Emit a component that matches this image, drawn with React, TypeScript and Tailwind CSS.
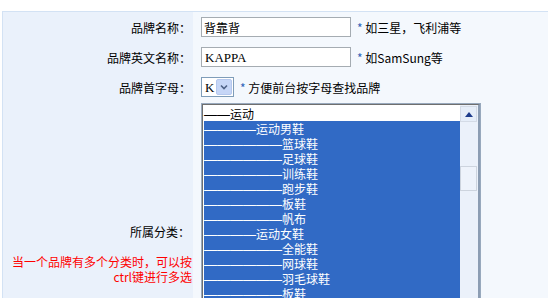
import React from 'react';

const CATEGORIES = [
  { depth: 1, name: '运动', selected: false },
  { depth: 2, name: '运动男鞋', selected: true },
  { depth: 3, name: '篮球鞋', selected: true },
  { depth: 3, name: '足球鞋', selected: true },
  { depth: 3, name: '训练鞋', selected: true },
  { depth: 3, name: '跑步鞋', selected: true },
  { depth: 3, name: '板鞋', selected: true },
  { depth: 3, name: '帆布', selected: true },
  { depth: 2, name: '运动女鞋', selected: true },
  { depth: 3, name: '全能鞋', selected: true },
  { depth: 3, name: '网球鞋', selected: true },
  { depth: 3, name: '羽毛球鞋', selected: true },
  { depth: 3, name: '板鞋', selected: true },
  { depth: 3, name: '帆布', selected: true },
];

function Hint({ children }: { children: React.ReactNode }) {
  return (
    <span className="ml-[6px] whitespace-nowrap">
      <span className="text-[#2F62B8]">*</span> {children}
    </span>
  );
}

function Row({ label, children }: { label: React.ReactNode; children: React.ReactNode }) {
  return (
    <div className="flex h-[30px]">
      <div className="w-[190px] shrink-0 bg-[#EAF1FB] flex items-center justify-end pr-[2px]">{label}</div>
      <div className="flex-1 flex items-center pl-[8px]">{children}</div>
    </div>
  );
}

export default function App() {
  return (
    <div className="w-[548px] h-[298px] overflow-hidden bg-white pt-[11px] text-[12px] leading-[15px] text-black font-['Noto_Sans_CJK_SC',sans-serif]">
      <div className="ml-[2px] border-l border-t border-[#D3E2F4] bg-[#F4F8FD]">

        <Row label="品牌名称：">
          <div className="w-[150px] h-[20px] border border-[#A5ACB2] bg-white px-[2px] flex items-center">背靠背</div>
          <Hint>如三星，飞利浦等</Hint>
        </Row>

        <Row label="品牌英文名称：">
          <div className="w-[150px] h-[20px] border border-[#A5ACB2] bg-white px-[3px] flex items-center font-['Liberation_Serif','Noto_Sans_CJK_SC',serif] text-[13px]">KAPPA</div>
          <Hint>如SamSung等</Hint>
        </Row>

        <Row label="品牌首字母：">
          <div className="w-[33px] h-[20px] border border-[#7F9DB9] bg-white flex items-center">
            <span className="flex-1 pl-[3px] font-['Liberation_Serif',serif] text-[13px]">K</span>
            <span className="w-[16px] h-[16px] mr-[1px] rounded-[2px] bg-[#C6D6F7] border border-[#B5C8EE] flex items-center justify-center">
              <svg width="8" height="6" viewBox="0 0 8 6">
                <path d="M1 1.5 L4 4.5 L7 1.5" fill="none" stroke="#4D6185" strokeWidth="1.6" />
              </svg>
            </span>
          </div>
          <Hint>方便前台按字母查找品牌</Hint>
        </Row>

        <div className="flex">
          <div className="w-[190px] shrink-0 bg-[#EAF1FB] flex flex-col justify-center items-end pr-[1px]">
            <div className="pr-[2px]">所属分类：</div>
            <div className="h-[15px]" />
            <div className="text-[#FF0000] text-right">当一个品牌有多个分类时，可以按<br />ctrl键进行多选</div>
          </div>
          <div className="flex-1 pl-[8px] py-[1px]">
            <div className="w-[280px] h-[301px] border border-[#98A9BD] overflow-hidden">
              <div className="h-full flex border-t border-l border-[#6F6F6F] border-r-2 border-r-[#8C9DB3] bg-white">
                <div className="flex-1 pl-[1px] pt-[1px] overflow-hidden">
                  {CATEGORIES.map((c, i) => (
                    <div
                      key={i}
                      className={
                        c.selected
                          ? 'h-[15px] bg-[#316AC5] text-white whitespace-nowrap'
                          : 'h-[15px] bg-white text-black whitespace-nowrap'
                      }
                    >
                      <span className="font-['Liberation_Sans',sans-serif] text-[13px]">{'——'.repeat(c.depth)}</span>
                      {c.name}
                    </div>
                  ))}
                </div>
                <div className="w-[18px] shrink-0 bg-[#EBF1FA] pt-[1px] flex flex-col">
                  <div className="h-[16px] w-[17px] border border-[#D4DBE6] bg-[#E6EEF9] flex items-center justify-center">
                    <svg width="8" height="5" viewBox="0 0 8 5">
                      <path d="M4 0 L8 5 L0 5 Z" fill="#1E3C8C" />
                    </svg>
                  </div>
                  <div className="h-[44px]" />
                  <div className="h-[25px] w-[17px] border border-[#CDD4DE] bg-[#EEF3FB]" />
                </div>
              </div>
            </div>
          </div>
        </div>

      </div>
    </div>
  );
}
